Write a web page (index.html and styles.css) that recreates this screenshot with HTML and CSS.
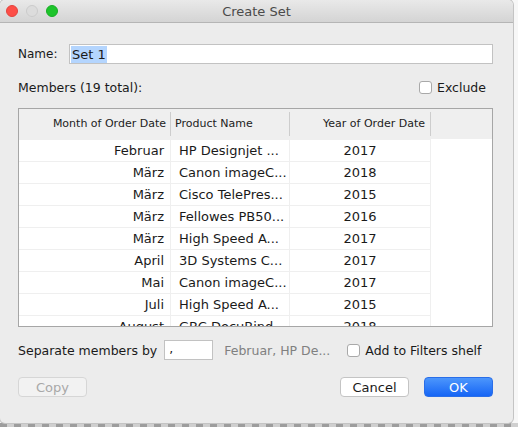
FILE: index.html
```html
<!DOCTYPE html>
<html lang="en">
<head>
    <meta charset="UTF-8">
    <title>Create Set</title>
    <link rel="stylesheet" href="styles.css">
</head>
<body>
    <div class="window">
        <div class="titlebar">
            <div class="lights">
                <span class="light red"></span>
                <span class="light gray"></span>
                <span class="light green"></span>
            </div>
            <div class="title">Create Set</div>
        </div>

        <div class="content">
            <div class="name-row">
                <label class="name-label">Name:</label>
                <div class="text-input"><span class="selected">Set 1</span></div>
            </div>

            <div class="members-row">
                <span>Members (19 total):</span>
                <label class="check"><span class="box"></span>Exclude</label>
            </div>

            <div class="table">
                <div class="head">
                    <div class="hcell right">Month of Order Date</div>
                    <div class="hcell">Product Name</div>
                    <div class="hcell right last">Year of Order Date</div>
                    <div class="hcell blank"></div>
                </div>
                <div class="rows" id="rows"></div>
            </div>

            <div class="sep-row">
                <span>Separate members by</span>
                <div class="sep-input">,</div>
                <span class="preview">Februar, HP De...</span>
                <label class="check"><span class="box"></span>Add to Filters shelf</label>
            </div>

            <div class="button-row">
                <button class="btn disabled">Copy</button>
                <div class="spacer"></div>
                <button class="btn">Cancel</button>
                <button class="btn primary">OK</button>
            </div>
        </div>
    </div>

    <script>
        const members = [
            ['Februar', 'HP Designjet ...', '2017'],
            ['März', 'Canon imageC...', '2018'],
            ['März', 'Cisco TelePres...', '2015'],
            ['März', 'Fellowes PB50...', '2016'],
            ['März', 'High Speed A...', '2017'],
            ['April', '3D Systems C...', '2017'],
            ['Mai', 'Canon imageC...', '2017'],
            ['Juli', 'High Speed A...', '2015'],
            ['August', 'GBC DocuBind...', '2018']
        ];

        const rows = document.getElementById('rows');
        members.forEach(m => {
            const row = document.createElement('div');
            row.className = 'row';
            row.innerHTML = `<div class="cell month">${m[0]}</div><div class="cell product">${m[1]}</div><div class="cell year">${m[2]}</div><div class="cell blank"></div>`;
            rows.appendChild(row);
        });
    </script>
</body>
</html>
```

FILE: styles.css
```css
body {
    margin: 0;
    height: 427px;
    overflow: hidden;
    background:
        repeating-linear-gradient(90deg, #9d9d9d 0 7px, #cfcfcf 7px 14px) bottom / 100% 4px no-repeat,
        #f7f7f7;
    font-family: "DejaVu Sans", "Liberation Sans", sans-serif;
    font-size: 12px;
    color: #1a1a1a;
}

.window {
    width: 513px;
    height: 423px;
    background: #ececec;
    border-radius: 5px;
    box-shadow: 0 0 0 1px #c4c4c4;
    overflow: hidden;
    display: flex;
    flex-direction: column;
}

.titlebar {
    height: 22px;
    flex-shrink: 0;
    background: linear-gradient(#e9e9e9, #d4d4d4);
    border-bottom: 1px solid #b5b5b5;
    display: flex;
    align-items: center;
    position: relative;
}

.lights {
    display: flex;
    gap: 8px;
    padding-left: 6px;
}

.light {
    width: 12px;
    height: 12px;
    border-radius: 50%;
    box-sizing: border-box;
}
.light.red { background: #fd4e47; border: 1px solid #e2443e; }
.light.gray { background: #dcdcdc; border: 1px solid #cbcbcb; }
.light.green { background: #1dc42b; border: 1px solid #18ad25; }

.title {
    position: absolute;
    left: 0;
    right: 0;
    text-align: center;
    font-size: 13px;
    color: #4a4a4a;
}

.content {
    padding: 21px 20px 0 18px;
    display: flex;
    flex-direction: column;
}

.name-row {
    display: flex;
    align-items: center;
    height: 20px;
}

.name-label {
    width: 51px;
}

.text-input {
    flex-grow: 1;
    height: 20px;
    box-sizing: border-box;
    background: white;
    border: 1px solid #c2c2c2;
    padding: 1px 1px;
    display: flex;
    align-items: center;
}

.selected {
    background: #b4d5fe;
    padding: 1px 1px;
    font-size: 13px;
}

.members-row {
    display: flex;
    justify-content: space-between;
    align-items: center;
    margin-top: 14px;
    height: 18px;
    font-size: 12.5px;
}

.check {
    display: flex;
    align-items: center;
    gap: 5px;
}

.box {
    width: 13px;
    height: 13px;
    box-sizing: border-box;
    background: white;
    border: 1px solid #a9a9a9;
    border-radius: 3px;
}

.members-row .check {
    margin-right: 7px;
}

.table {
    margin-top: 12px;
    height: 219px;
    box-sizing: border-box;
    border: 1px solid #a6a6a6;
    background: white;
    overflow: hidden;
}

.head, .row {
    display: grid;
    grid-template-columns: 152px 119px 141px 1fr;
}

.head {
    height: 30px;
    background: #efefef;
    font-size: 11px;
    color: #222;
    align-items: center;
}

.hcell {
    height: 24px;
    line-height: 24px;
    padding-left: 4px;
    border-right: 1px solid #cdcdcd;
    white-space: nowrap;
}
.hcell.right {
    text-align: right;
    padding-left: 0;
    padding-right: 4px;
}
.hcell.last {
    padding-right: 5px;
}
.hcell.blank {
    border-right: none;
}

.row {
    height: 22px;
    box-sizing: border-box;
    border-top: 1px solid #efefef;
    font-size: 13px;
}

.cell {
    line-height: 21px;
    border-right: 1px solid #efefef;
    white-space: nowrap;
    overflow: hidden;
}
.cell.month {
    text-align: right;
    padding-right: 6px;
}
.cell.product {
    padding-left: 8px;
}
.cell.year {
    text-align: center;
}
.cell.blank {
    border-right: none;
    background: white;
}
.row .blank {
    margin-top: -1px;
    border-top: 1px solid white;
}

.sep-row {
    display: flex;
    align-items: center;
    margin-top: 13px;
    height: 20px;
    font-size: 12.5px;
}

.sep-input {
    width: 49px;
    height: 20px;
    box-sizing: border-box;
    margin-left: 7px;
    background: white;
    border: 1px solid #c2c2c2;
    padding-left: 4px;
    line-height: 16px;
}

.preview {
    color: #808080;
    margin-left: 11px;
}

.sep-row .check {
    margin-left: 17px;
}

.button-row {
    display: flex;
    align-items: center;
    margin-top: 17px;
    gap: 15px;
}

.spacer {
    flex-grow: 1;
}

.btn {
    width: 69px;
    height: 20px;
    font-family: inherit;
    font-size: 13px;
    background: white;
    border: 1px solid #c4c4c4;
    border-radius: 4px;
    color: #1a1a1a;
    padding: 0;
}
.btn.disabled {
    background: #f2f2f2;
    border-color: #d6d6d6;
    color: #a8a8a8;
}
.btn.primary {
    background: linear-gradient(#4c96fc, #1665f5);
    border-color: #2a6ee8;
    color: white;
}
```
